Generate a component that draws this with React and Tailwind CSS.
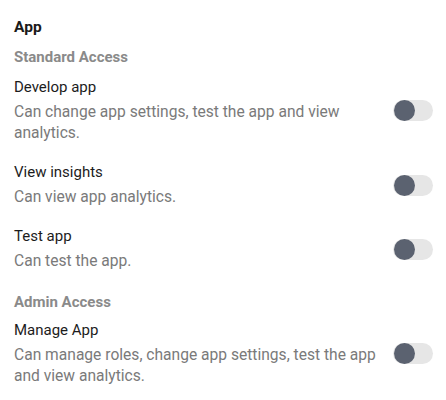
import React from "react";

function Toggle() {
  return (
    <div className="relative h-[21px] w-[40px] shrink-0 rounded-full bg-[#e6e6e6]">
      <div className="absolute left-[1px] top-0 h-[21px] w-[21px] rounded-full bg-[#5b6270]" />
    </div>
  );
}

function Item({ title, desc }) {
  return (
    <div className="flex items-center justify-between gap-[16px]">
      <div className="flex-1">
        <div className="text-[15px] leading-[20px] text-[#1c1c1c]">{title}</div>
        <div className="mt-[5px] text-[15.6px] leading-[21px] text-[#7a7a7a]">{desc}</div>
      </div>
      <Toggle />
    </div>
  );
}

export default function App() {
  return (
    <div
      className="h-[400px] w-[446px] bg-white pl-[14px] pr-[13px] pt-[17px]"
      style={{ fontFamily: "Roboto, 'Noto Sans', sans-serif" }}
    >
      <div className="text-[15.5px] font-bold leading-[20px] text-[#1a1a1a]">App</div>
      <div className="mt-[10px] text-[15px] font-bold leading-[20px] text-[#8a8a8a]">Standard Access</div>
      <div className="mt-[10px]">
        <Item title="Develop app" desc="Can change app settings, test the app and view analytics." />
      </div>
      <div className="mt-[18px]">
        <Item title="View insights" desc="Can view app analytics." />
      </div>
      <div className="mt-[18px]">
        <Item title="Test app" desc="Can test the app." />
      </div>
      <div className="mt-[20px] text-[15px] font-bold leading-[20px] text-[#8a8a8a]">Admin Access</div>
      <div className="mt-[8px]">
        <Item title="Manage App" desc="Can manage roles, change app settings, test the app and view analytics." />
      </div>
    </div>
  );
}
